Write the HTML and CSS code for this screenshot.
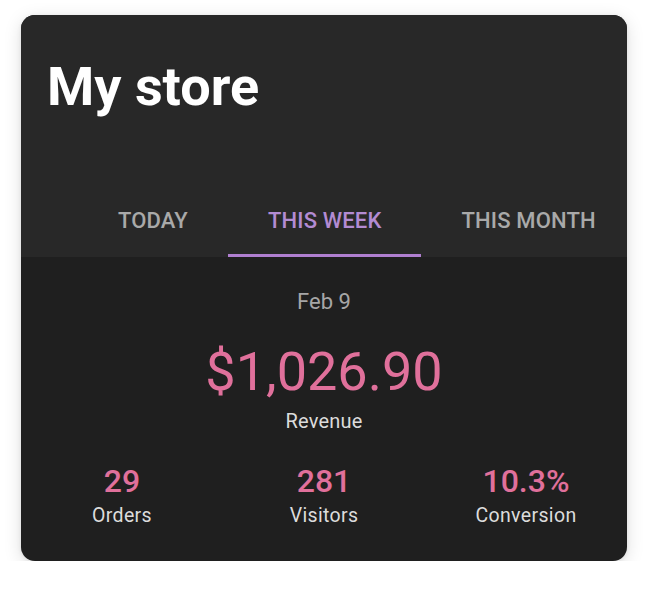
FILE: index.html
```html
<!DOCTYPE html>
<html lang="en">
<head>
<meta charset="utf-8">
<title>My store</title>
<link rel="stylesheet" href="styles.css">
</head>
<body>
  <div class="card">
    <div class="header">
      <h1 class="title">My store</h1>
      <div class="tabs">
        <div class="tab">TODAY</div>
        <div class="tab active">THIS WEEK</div>
        <div class="tab">THIS MONTH</div>
      </div>
    </div>
    <div class="content">
      <div class="date">Feb 9</div>
      <div class="amount">$1,026.90</div>
      <div class="amount-label">Revenue</div>
      <div class="stats">
        <div class="stat">
          <div class="stat-value">29</div>
          <div class="stat-label">Orders</div>
        </div>
        <div class="stat">
          <div class="stat-value">281</div>
          <div class="stat-label">Visitors</div>
        </div>
        <div class="stat">
          <div class="stat-value">10.3%</div>
          <div class="stat-label">Conversion</div>
        </div>
      </div>
    </div>
  </div>
</body>
</html>
```

FILE: styles.css
```css
* { box-sizing: border-box; }

html, body {
  margin: 0;
  padding: 0;
  background: #ffffff;
}

body {
  font-family: Roboto, "Noto Sans", "Liberation Sans", sans-serif;
  padding: 15px 21px 0 21px;
}

.card {
  width: 606px;
  height: 546px;
  border-radius: 14px;
  overflow: hidden;
  background: #1f1f1f;
  box-shadow: 0 4px 18px rgba(0, 0, 0, 0.13), 0 1px 4px rgba(0, 0, 0, 0.08);
  display: flex;
  flex-direction: column;
}

.header {
  background: #282828;
  padding-top: 40px;
  display: flex;
  flex-direction: column;
}

.title {
  margin: 0;
  padding-left: 26px;
  font-size: 54px;
  line-height: 64px;
  font-weight: 700;
  color: #ffffff;
}

.tabs {
  margin-top: 89.5px;
  padding-left: 57px;
  display: flex;
  white-space: nowrap;
}

.tab {
  flex: none;
  padding: 0 40px 21.5px 40px;
  font-size: 22px;
  line-height: 24px;
  font-weight: 500;
  letter-spacing: 0.15px;
  color: #a9a9a9;
  border-bottom: 3px solid transparent;
}

.tab.active {
  color: #b38bd3;
  border-bottom-color: #b07fd0;
}

.content {
  flex: 1;
  display: flex;
  flex-direction: column;
  align-items: center;
  padding-top: 31.5px;
  text-align: center;
}

.date {
  font-size: 22px;
  line-height: 26px;
  color: #a6a6a6;
}

.amount {
  margin-top: 27px;
  font-size: 54px;
  line-height: 60px;
  font-weight: 400;
  color: #e0709b;
}

.amount-label {
  margin-top: 7.7px;
  font-size: 20px;
  line-height: 24px;
  letter-spacing: 0.2px;
  color: #dcdcdc;
}

.stats {
  margin-top: 30px;
  width: 100%;
  display: grid;
  grid-template-columns: repeat(3, 1fr);
}

.stat {
  display: flex;
  flex-direction: column;
  align-items: center;
}

.stat-value {
  font-size: 32px;
  line-height: 36px;
  font-weight: 500;
  color: #e0709b;
}

.stat-label {
  margin-top: 5.3px;
  font-size: 19.5px;
  line-height: 24px;
  letter-spacing: 0.35px;
  color: #dcdcdc;
}
```
